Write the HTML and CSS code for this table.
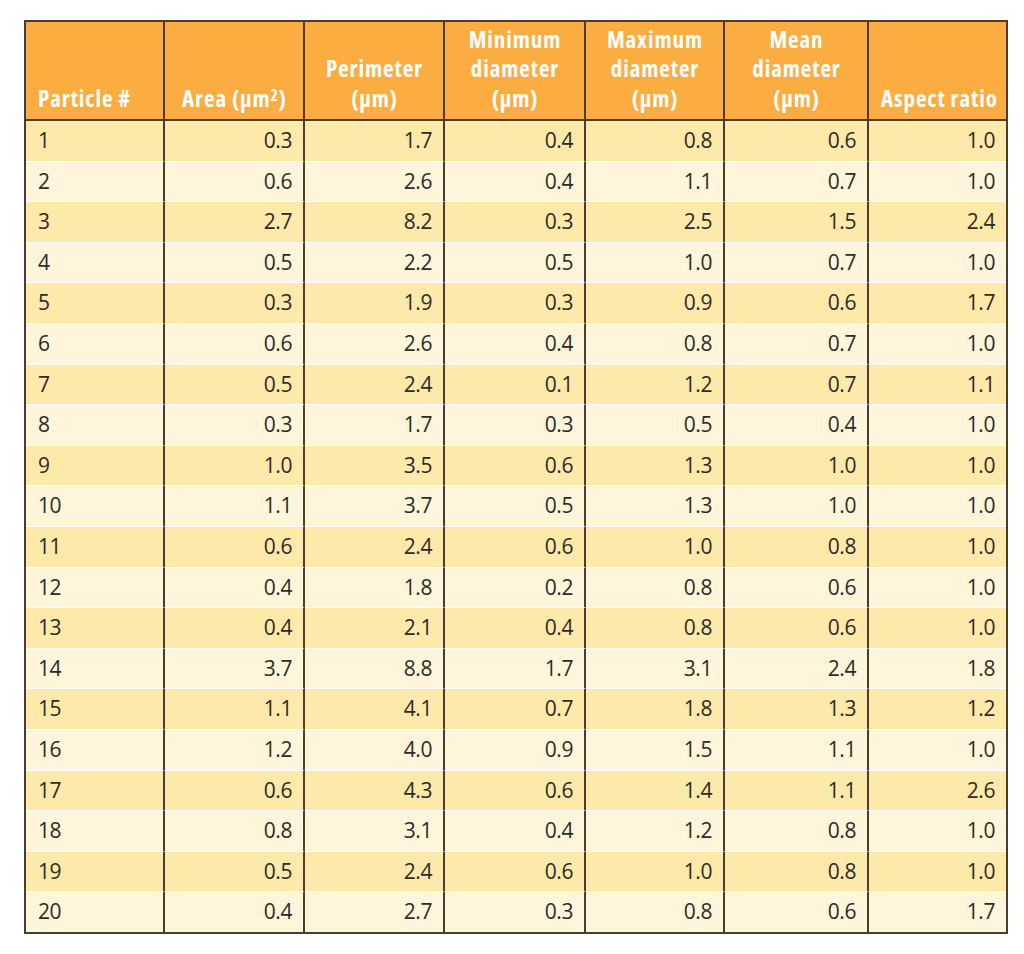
FILE: index.html
```html
<!DOCTYPE html>
<html lang="en">
<head>
<meta charset="utf-8">
<title>Particle measurements</title>
<link rel="stylesheet" href="styles.css">
</head>
<body>
<div class="page">
  <table class="data">
    <colgroup>
      <col class="w139">
      <col class="w140">
      <col class="w140">
      <col class="w141">
      <col class="w139">
      <col class="w144">
      <col class="w137">
    </colgroup>
    <thead>
      <tr class="hrow">
        <th class="first">Particle #</th>
        <th>Area (µm<span class="sup">2</span>)</th>
        <th>Perimeter<br>(µm)</th>
        <th>Minimum<br>diameter<br>(µm)</th>
        <th>Maximum<br>diameter<br>(µm)</th>
        <th>Mean<br>diameter<br>(µm)</th>
        <th class="last">Aspect ratio</th>
      </tr>
    </thead>
    <tbody>
      <tr class="odd"><td class="first">1</td><td>0.3</td><td>1.7</td><td>0.4</td><td>0.8</td><td>0.6</td><td class="last">1.0</td></tr>
      <tr class="even"><td class="first">2</td><td>0.6</td><td>2.6</td><td>0.4</td><td>1.1</td><td>0.7</td><td class="last">1.0</td></tr>
      <tr class="odd"><td class="first">3</td><td>2.7</td><td>8.2</td><td>0.3</td><td>2.5</td><td>1.5</td><td class="last">2.4</td></tr>
      <tr class="even"><td class="first">4</td><td>0.5</td><td>2.2</td><td>0.5</td><td>1.0</td><td>0.7</td><td class="last">1.0</td></tr>
      <tr class="odd"><td class="first">5</td><td>0.3</td><td>1.9</td><td>0.3</td><td>0.9</td><td>0.6</td><td class="last">1.7</td></tr>
      <tr class="even"><td class="first">6</td><td>0.6</td><td>2.6</td><td>0.4</td><td>0.8</td><td>0.7</td><td class="last">1.0</td></tr>
      <tr class="odd"><td class="first">7</td><td>0.5</td><td>2.4</td><td>0.1</td><td>1.2</td><td>0.7</td><td class="last">1.1</td></tr>
      <tr class="even"><td class="first">8</td><td>0.3</td><td>1.7</td><td>0.3</td><td>0.5</td><td>0.4</td><td class="last">1.0</td></tr>
      <tr class="odd"><td class="first">9</td><td>1.0</td><td>3.5</td><td>0.6</td><td>1.3</td><td>1.0</td><td class="last">1.0</td></tr>
      <tr class="even"><td class="first">10</td><td>1.1</td><td>3.7</td><td>0.5</td><td>1.3</td><td>1.0</td><td class="last">1.0</td></tr>
      <tr class="odd"><td class="first">11</td><td>0.6</td><td>2.4</td><td>0.6</td><td>1.0</td><td>0.8</td><td class="last">1.0</td></tr>
      <tr class="even"><td class="first">12</td><td>0.4</td><td>1.8</td><td>0.2</td><td>0.8</td><td>0.6</td><td class="last">1.0</td></tr>
      <tr class="odd"><td class="first">13</td><td>0.4</td><td>2.1</td><td>0.4</td><td>0.8</td><td>0.6</td><td class="last">1.0</td></tr>
      <tr class="even"><td class="first">14</td><td>3.7</td><td>8.8</td><td>1.7</td><td>3.1</td><td>2.4</td><td class="last">1.8</td></tr>
      <tr class="odd"><td class="first">15</td><td>1.1</td><td>4.1</td><td>0.7</td><td>1.8</td><td>1.3</td><td class="last">1.2</td></tr>
      <tr class="even"><td class="first">16</td><td>1.2</td><td>4.0</td><td>0.9</td><td>1.5</td><td>1.1</td><td class="last">1.0</td></tr>
      <tr class="odd"><td class="first">17</td><td>0.6</td><td>4.3</td><td>0.6</td><td>1.4</td><td>1.1</td><td class="last">2.6</td></tr>
      <tr class="even"><td class="first">18</td><td>0.8</td><td>3.1</td><td>0.4</td><td>1.2</td><td>0.8</td><td class="last">1.0</td></tr>
      <tr class="odd"><td class="first">19</td><td>0.5</td><td>2.4</td><td>0.6</td><td>1.0</td><td>0.8</td><td class="last">1.0</td></tr>
      <tr class="even"><td class="first">20</td><td>0.4</td><td>2.7</td><td>0.3</td><td>0.8</td><td>0.6</td><td class="last">1.7</td></tr>
    </tbody>
  </table>
</div>
</body>
</html>
```
FILE: styles.css
```css
html, body {
  margin: 0;
  padding: 0;
  background: #ffffff;
}

.page {
  padding: 20px 16px 0 24px;
  font-family: "Open Sans", "Roboto", sans-serif;
}

.data {
  width: 984px;
  table-layout: fixed;
  border-collapse: separate;
  border-spacing: 0;
  border: 2px solid #4b3d2e;
}

.w137 { width: 137px; }
.w139 { width: 139px; }
.w140 { width: 140px; }
.w141 { width: 141px; }
.w144 { width: 144px; }

.data th,
.data td {
  padding: 0 11px 0 12px;
  border-right: 2px solid #4b3d2e;
  white-space: nowrap;
}

.data th.last,
.data td.last {
  border-right: 0;
}

.hrow {
  height: 99px;
}

.data th {
  background: #fbad41;
  color: #ffffff;
  font-weight: 700;
  font-stretch: 87.5%;
  font-size: 23px;
  letter-spacing: 0.9px;
  line-height: 29.5px;
  text-align: center;
  vertical-align: bottom;
  padding-bottom: 6px;
  border-bottom: 2px solid #4b3d2e;
}

.data th.first {
  text-align: left;
}

.sup {
  font-size: 0.68em;
  vertical-align: 0.38em;
  line-height: 0;
}

.data td {
  font-size: 21px;
  font-weight: 380;
  font-stretch: 90%;
  letter-spacing: -0.4px;
  line-height: 39.6px;
  color: #2f2a25;
  text-align: right;
  border-top: 1px solid #ffffff;
}

.data tbody tr:first-child td {
  border-top: 0;
}

.data td.first {
  text-align: left;
}

.odd td {
  background: #fde9aa;
}

.even td {
  background: #fef5da;
}
```
